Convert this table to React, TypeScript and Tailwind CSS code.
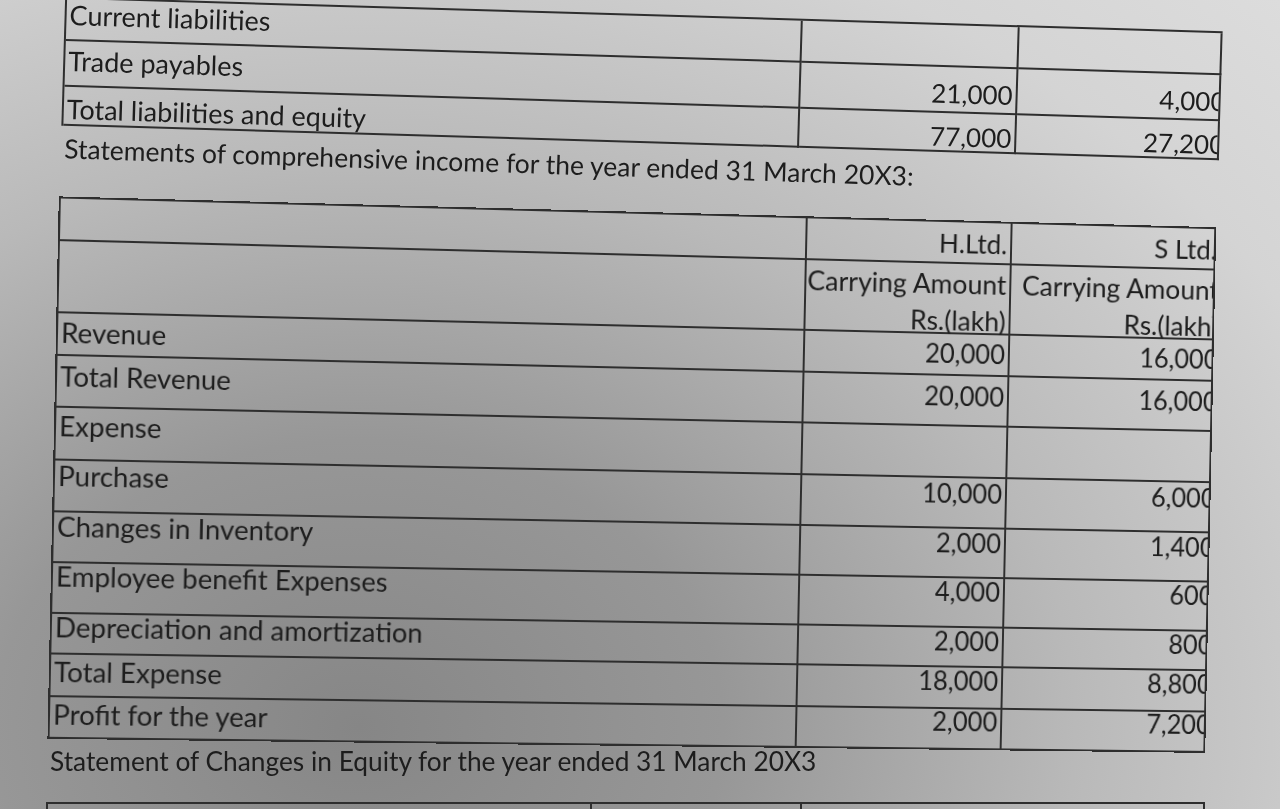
type Row = { label: string; cls: string; ncls?: string; a?: string; b?: string };

const line = "border-[#2e2e2e]";

const topRows: Row[] = [
  { label: "Current liabilities", cls: "h-[42px] pb-[8px]" },
  { label: "Trade payables", cls: "h-[46px] pb-[4px]", ncls: "h-[46px] pt-[8px]", a: "21,000", b: "4,000" },
  { label: "Total liabilities and equity", cls: "h-[39px] pt-[8px]", ncls: "h-[39px] pt-[10px]", a: "77,000", b: "27,200" },
];

const incomeRows: Row[] = [
  { label: "Revenue", cls: "h-[42px] pb-[2px]", a: "20,000", b: "16,000" },
  { label: "Total Revenue", cls: "h-[51px] pb-[8px]", a: "20,000", b: "16,000" },
  { label: "Expense", cls: "h-[52px] pb-[14px]" },
  { label: "Purchase", cls: "h-[51px] pb-[18px]", a: "10,000", b: "6,000" },
  { label: "Changes in Inventory", cls: "h-[50px] pb-[20px]", a: "2,000", b: "1,400" },
  { label: "Employee benefit Expenses", cls: "h-[50px] pb-[21px]", a: "4,000", b: "600" },
  { label: "Depreciation and amortization", cls: "h-[40px] pb-[12px]", a: "2,000", b: "800" },
  { label: "Total Expense", cls: "h-[42px] pb-[6px]", ncls: "h-[42px] pb-[14px]", a: "18,000", b: "8,800" },
  { label: "Profit for the year", cls: "h-[41px] pb-[5px]", ncls: "h-[41px] pb-[14px]", a: "2,000", b: "7,200" },
];

function Cells({ row }: { row: Row }) {
  const n = row.ncls ?? row.cls;
  return (
    <>
      <div className={`flex items-center border-r-2 border-b-2 ${line} pl-[3px] whitespace-nowrap overflow-x-clip ${row.cls}`}>
        {row.label}
      </div>
      <div className={`flex items-center justify-end border-r-2 border-b-2 ${line} pr-[3px] whitespace-nowrap text-[26px] ${n}`}>
        {row.a}
      </div>
      <div className={`flex items-center justify-end border-r-2 border-b-2 ${line} overflow-x-clip whitespace-nowrap text-[26px] ${n}`}>
        <span className="-mr-[7px]">{row.b}</span>
      </div>
    </>
  );
}

export default function App() {
  return (
    <div className="w-[1280px] h-[809px] overflow-hidden bg-[radial-gradient(ellipse_at_28%_90%,#868686_0%,#979797_28%,#b9b9b9_55%,#d4d4d4_82%,#dcdcdc_100%)] font-['Lato','Liberation_Sans',sans-serif] text-[27px] text-[#1d1d1d]">
      <div className="flex flex-col items-start perspective-[1000px]">
        {/* balance sheet tail */}
        <div className={`mt-[14px] ml-[63px] w-[1158px] rotate-[1.7deg] grid grid-cols-[736px_217px_203px] border-l-2 border-t-2 ${line}`}>
          {topRows.map((r) => (
            <Cells key={r.label} row={r} />
          ))}
        </div>

        <div className="mt-[4px] ml-[64px] w-fit rotate-[1.85deg] h-[30px] leading-[30px] text-[26.5px] whitespace-nowrap">
          Statements of comprehensive income for the year ended 31 March 20X3:
        </div>

        {/* income statement */}
        <div
          className={`mt-[35px] ml-[62px] w-[1158px] rotate-[1.2deg] rotate-y-[1.55deg] grid grid-cols-[739px_208px_209px] border-l-2 border-t-2 ${line}`}
        >
          <div className={`h-[42px] border-r-2 border-b-2 ${line}`} />
          <div className={`h-[42px] flex items-center justify-end border-r-2 border-b-2 ${line} pr-[3px] pt-[4px] text-[26.5px]`}>
            H.Ltd.
          </div>
          <div className={`h-[42px] flex items-center justify-end border-r-2 border-b-2 ${line} overflow-x-clip whitespace-nowrap pt-[4px] text-[26.5px]`}>
            <span className="-mr-[3px]">S Ltd.</span>
          </div>

          <div className={`h-[71px] border-r-2 border-b-2 ${line}`} />
          <div className={`h-[71px] flex flex-col items-end leading-[37px] pt-[1px] border-r-2 border-b-2 ${line} pr-[3px] whitespace-nowrap`}>
            <span>Carrying Amount</span>
            <span>Rs.(lakh)</span>
          </div>
          <div className={`h-[71px] flex flex-col items-end leading-[37px] pt-[1px] border-r-2 border-b-2 ${line} overflow-x-clip whitespace-nowrap`}>
            <span className="-mr-[6px]">Carrying Amount</span>
            <span className="-mr-[6px]">Rs.(lakh)</span>
          </div>

          {incomeRows.map((r) => (
            <Cells key={r.label} row={r} />
          ))}
        </div>

        <div className="ml-[50px] w-fit h-[30px] leading-[30px] text-[26.3px] whitespace-nowrap">
          Statement of Changes in Equity for the year ended 31 March 20X3
        </div>

        {/* next table, cut off by the page edge */}
        <div className={`mt-[26px] ml-[46px] w-[1159px] grid grid-cols-[544px_210px_403px] border-l-2 border-t-2 ${line}`}>
          <div className={`h-[40px] border-r-2 ${line}`} />
          <div className={`border-r-2 ${line}`} />
          <div className={`border-r-2 ${line}`} />
        </div>
      </div>
    </div>
  );
}
